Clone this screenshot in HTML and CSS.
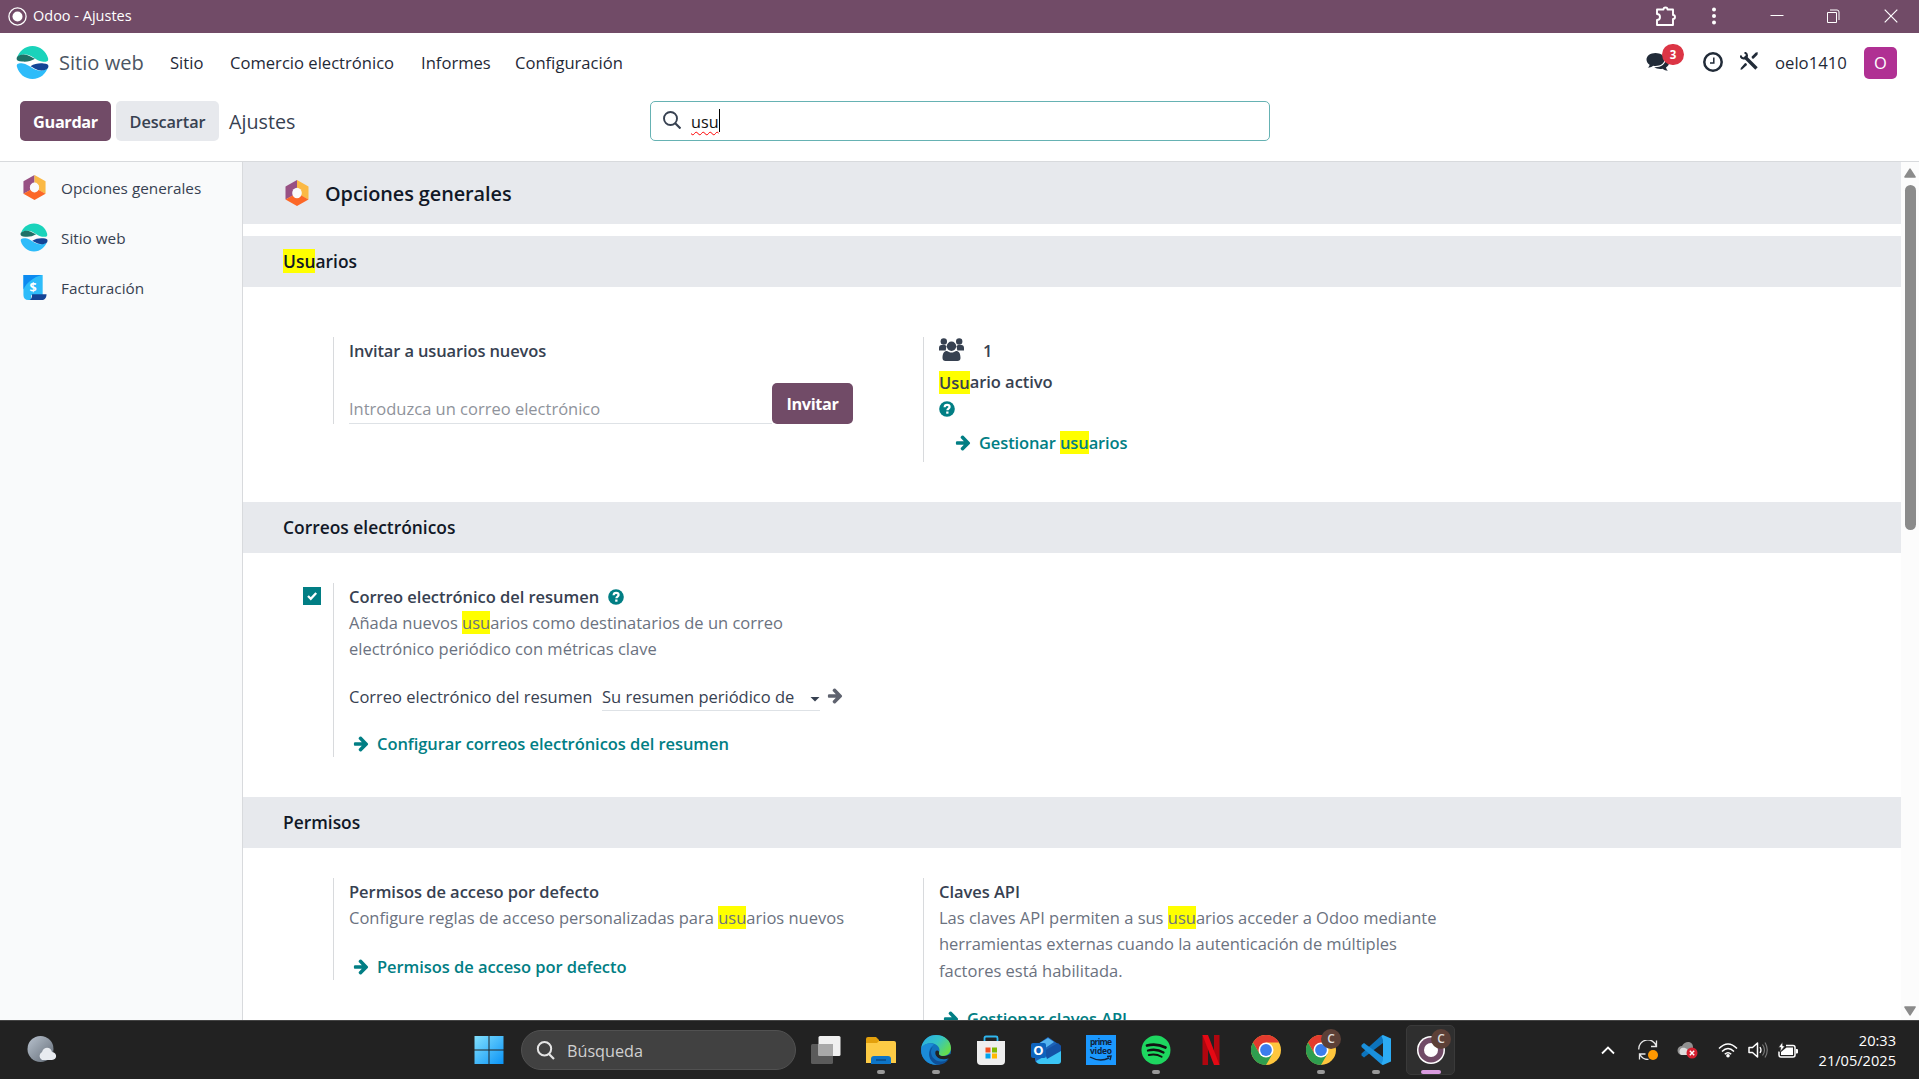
FILE: index.html
```html
<!DOCTYPE html>
<html lang="es">
<head>
<meta charset="utf-8">
<title>Odoo - Ajustes</title>
<link rel="stylesheet" href="styles.css">
</head>
<body>
<svg class="defs" width="0" height="0" aria-hidden="true">
  <symbol id="arrow" viewBox="0 130 1472 1660"><path fill="currentColor" d="M1472 960q0 54-37 91l-651 651q-39 37-91 37-51 0-90-37l-75-75q-38-38-38-91t38-91l293-293H117q-52 0-84.500-37.500T0 1024V896q0-53 32.500-90.500T117 768h704L528 474q-38-36-38-90t38-90l75-75q38-38 90-38 53 0 91 38l651 651q37 35 37 90z"/></symbol>
  <symbol id="help" viewBox="0 0 16 16"><circle cx="8" cy="8" r="7.800" fill="currentColor"/><path d="M5.600 6.300C5.700 4.600 6.800 3.900 8.100 3.900c1.500 0 2.500.9 2.500 2.100 0 1.600-2.200 1.700-2.200 3.300" fill="none" stroke="#fff" stroke-width="2.200"/><rect x="7.200" y="10.500" width="2.300" height="2.200" fill="#fff"/></symbol>
  <symbol id="web" viewBox="0 0 33 33"><path fill="#1ad3bb" d="M1 12C3 5 9 0 16.500 0S30 5 32 12c1 4-2 4-6 3.500C20 15 16 8.500 9 8.500 5 8.500 2 10 1 12z"/><path fill="#1f7167" d="M1 11c4-3.500 9-3 13.500-.5 1.500.8 3 1.500 4.500 2.200-4 2.500-8.500 3.300-13 2.800C1.500 15.200-.2 14 1 11z"/><path fill="#2ebcfa" d="M1 21c-1-3.500 2-4 6-3.500 6 .8 10 7 17 7 4 0 7-1.500 8-3.500-2 7-8 12-15.500 12S3 28 1 21z"/><path fill="#144496" d="M32 22c-4 3.500-9 3-13.500.5-1.500-.8-2.500-1.500-4-2.200 4-2.500 8.500-3.300 13-2.800 4.500.3 5.700 1.500 4.500 4.500z"/></symbol>
  <symbol id="general" viewBox="0 0 24 26"><path fill="#985184" d="M12 0v8L8 10.500v5L.500 19.500V6.500z"/><path fill="#fbb945" d="M12 0l11.500 6.500v13L16 15.500v-5L12 8z"/><path fill="#fc6727" d="M.500 19.500L8 15.300l4 2.700 4-2.700 7.500 4.200L12 26z"/><ellipse class="hole" cx="12" cy="13" rx="4.800" ry="5.200"/></symbol>
  <symbol id="chrome" viewBox="0 0 30 30"><circle cx="15" cy="15" r="15" fill="#ffc63d"/><path fill="#e33b2e" d="M2 7.500A15 15 0 0 1 28 7.500H15L8.500 18.800z"/><path fill="#2f9e4f" d="M2 7.500A15 15 0 0 0 15 30l6.500-11.200L8.500 18.800z"/><circle cx="15" cy="15" r="7.500" fill="#fff"/><circle cx="15" cy="15" r="5.900" fill="#3b7ded"/></symbol>
</svg>

<header class="titlebar">
  <svg class="app-dot" viewBox="0 0 19 19"><circle cx="9.500" cy="9.500" r="8.600" fill="none" stroke="#fff" stroke-width="1.300"/><circle cx="9.500" cy="9.500" r="5" fill="#fff"/></svg>
  <span class="window-title">Odoo - Ajustes</span>
  <div class="window-tools">
    <svg class="puzzle" viewBox="0 0 22 22"><path d="M2 4.500h6.500a2 2 0 0 1 4 0H18v5.500a2 2 0 0 1 0 4V20H2v-5a3 3 0 0 0 0-6z" fill="none" stroke="#fff" stroke-width="1.900" stroke-linejoin="round"/></svg>
    <svg class="dots" viewBox="0 0 6 18"><g fill="#fff"><circle cx="3" cy="2.500" r="2"/><circle cx="3" cy="9" r="2"/><circle cx="3" cy="15.500" r="2"/></g></svg>
    <svg class="win-btn minimize" viewBox="0 0 14 14"><path d="M.500 6.500h13" stroke="#fff"/></svg>
    <svg class="win-btn restore" viewBox="0 0 14 14"><path d="M1.500 3.500h9v10h-9zM4 1h7a2 2 0 0 1 2 2v8" fill="none" stroke="#fff"/></svg>
    <svg class="win-btn close" viewBox="0 0 14 14"><path d="M.700.700l12.600 12.600M13.300.700L.700 13.300" stroke="#fff" stroke-width="1.200"/></svg>
  </div>
</header>

<nav class="navbar">
  <svg class="brand-icon"><use href="#web"/></svg>
  <span class="brand">Sitio web</span>
  <span class="menu m-sitio">Sitio</span>
  <span class="menu m-com">Comercio electrónico</span>
  <span class="menu m-inf">Informes</span>
  <span class="menu m-conf">Configuración</span>
  <div class="systray">
    <div class="chat">
      <svg viewBox="0 0 24 20"><path fill="#212b38" d="M9.500 1C14.500 1 18.500 3.800 18.500 7.500S14.500 14 9.500 14c-.8 0-1.600-.1-2.300-.2C5.300 15.200 3.500 15.700 1.700 15.800c1-.9 1.700-1.800 1.900-3.100C1.700 11.500.500 9.600.500 7.500.500 3.800 4.500 1 9.500 1z"/><path fill="#212b38" d="M20 6.300c1.800 1.100 3 2.700 3 4.500 0 2-1.200 3.700-3 4.800.2 1.200.9 2.200 1.800 3.100-1.800-.1-3.800-.8-5.300-2-3 .6-6 .1-8.300-1.400 6.500.3 11.800-3.100 11.800-9z"/></svg>
      <span class="badge">3</span>
    </div>
    <svg class="clock" viewBox="0 0 20 20"><circle cx="10" cy="10" r="8.700" fill="none" stroke="#212b38" stroke-width="2.500"/><path d="M10.800 5.500v5.500H7" fill="none" stroke="#212b38" stroke-width="1.500"/></svg>
    <svg class="tools" viewBox="0 0 18 18"><path d="M4.500 4.500L16.500 16.500" stroke="#212b38" stroke-width="3.400"/><path d="M.500 3.500Q1 6 3.500 6.500T7 4Q7.200 1.200 4.500.500" fill="none" stroke="#212b38" stroke-width="2"/><path d="M12 6.500l-.5-1.800L15.800.500 17.800.200l-.3 2.500-4 4zM6.500 11.500L7 13l-5 4.500-1.500.3.300-1.800 4.300-5z" fill="#212b38"/></svg>
    <span class="user">oelo1410</span>
    <span class="avatar">O</span>
  </div>
</nav>

<div class="control-panel">
  <button class="btn primary save">Guardar</button>
  <button class="btn light">Descartar</button>
  <span class="crumb">Ajustes</span>
  <div class="search">
    <svg class="glass" viewBox="0 0 18 18"><circle cx="7.500" cy="7.500" r="6.500" fill="none" stroke="#374151" stroke-width="1.900"/><path d="M12 12l5.500 5.500" stroke="#374151" stroke-width="2.200"/></svg>
    <span class="query">usu</span><span class="caret"></span>
  </div>
</div>

<div class="workspace">
  <aside class="sidebar">
    <div class="tab"><svg class="ic-general"><use href="#general"/></svg><span>Opciones generales</span></div>
    <div class="tab"><svg class="ic-web"><use href="#web"/></svg><span>Sitio web</span></div>
    <div class="tab"><svg class="ic-inv" viewBox="0 0 25 26"><path d="M1 0h20v21H9v5H6c-3 0-5-2-5-5z" fill="#2ebcfa"/><path d="M1 0h19C12 2 4 8 1 15z" fill="#0d8af0"/><path d="M10 20h15c0 4-2 6-5 6H6c3 0 4-2 4-6z" fill="#144496"/><text x="11" y="17.500" text-anchor="middle" class="dollar">$</text></svg><span>Facturación</span></div>
  </aside>

  <main class="settings">
    <h2 class="app-head"><svg class="ic-general grey"><use href="#general"/></svg><span>Opciones generales</span></h2>

    <h3 class="band first"><mark>Usu</mark>arios</h3>
    <section class="block users">
      <div class="setting invite">
        <b class="label">Invitar a usuarios nuevos</b>
        <div class="invite-row"><span class="field placeholder">Introduzca un correo electrónico</span><button class="btn primary invite-btn">Invitar</button></div>
      </div>
      <div class="setting active-users">
        <div class="count"><svg viewBox="0 0 25 23"><g fill="#374151"><circle cx="4.800" cy="3.500" r="3.200"/><circle cx="20.200" cy="3.500" r="3.200"/><path d="M0 12.500V10c0-2 1-3 2.500-3H6l1.500 1-.8 4.500zM25 12.500V10c0-2-1-3-2.500-3H19l-1.500 1 .8 4.500z"/><circle cx="12.500" cy="8.300" r="4.700"/><path d="M3.500 20c0-4.500 1.500-7 4.500-7l2 1q2.500 1 5 0l2-1c3 0 4.500 2.500 4.500 7 0 2-1.200 3-3 3h-12c-1.800 0-3-1-3-3z"/></g></svg><b>1</b></div>
        <b class="label"><mark>Usu</mark>ario activo</b>
        <svg class="help"><use href="#help"/></svg>
        <a class="link"><svg><use href="#arrow"/></svg><span>Gestionar <mark>usu</mark>arios</span></a>
      </div>
    </section>

    <h3 class="band">Correos electrónicos</h3>
    <section class="block mails">
      <div class="setting digest">
        <span class="checkbox"><svg viewBox="0 0 18 18"><path d="M5 9l2.800 2.800L13.200 6" fill="none" stroke="#fff" stroke-width="2.300"/></svg></span>
        <b class="label">Correo electrónico del resumen<svg class="help"><use href="#help"/></svg></b>
        <p class="desc">Añada nuevos <mark>usu</mark>arios como destinatarios de un correo<br>electrónico periódico con métricas clave</p>
        <div class="digest-row"><span class="digest-label">Correo electrónico del resumen</span><span class="select"><span>Su resumen periódico de</span><i class="down"></i></span><svg class="ext"><use href="#arrow"/></svg></div>
        <a class="link"><svg><use href="#arrow"/></svg><span>Configurar correos electrónicos del resumen</span></a>
      </div>
    </section>

    <h3 class="band">Permisos</h3>
    <section class="block perms">
      <div class="setting defaults">
        <b class="label">Permisos de acceso por defecto</b>
        <p class="desc">Configure reglas de acceso personalizadas para <mark>usu</mark>arios nuevos</p>
        <a class="link"><svg><use href="#arrow"/></svg><span>Permisos de acceso por defecto</span></a>
      </div>
      <div class="setting keys">
        <b class="label">Claves API</b>
        <p class="desc">Las claves API permiten a sus <mark>usu</mark>arios acceder a Odoo mediante<br><span class="tight">herramientas externas cuando la autenticación de múltiples</span><br>factores está habilitada.</p>
        <a class="link"><svg><use href="#arrow"/></svg><span>Gestionar claves API</span></a>
      </div>
    </section>
  </main>
  <div class="scrollbar">
    <svg viewBox="0 0 12 10"><path d="M6 1.200L11 9H1z" fill="#8b8b8b" stroke="#8b8b8b" stroke-width="1.600" stroke-linejoin="round"/></svg>
    <span class="thumb"></span>
    <svg class="end" viewBox="0 0 12 10"><path d="M6 8.800L11 1H1z" fill="#8b8b8b" stroke="#8b8b8b" stroke-width="1.600" stroke-linejoin="round"/></svg>
  </div>
</div>

<footer class="taskbar">
  <svg class="weather" viewBox="0 0 30 28"><defs><linearGradient id="moon" x1="0" y1="0" x2="1" y2="1"><stop offset="0" stop-color="#b9c3cf"/><stop offset="1" stop-color="#626b76"/></linearGradient></defs><circle cx="13.500" cy="13" r="13" fill="url(#moon)"/><path d="M15 24a4.500 4.500 0 0 1 0-8c2-6 9-5 10 0 6 1 5 8 0 8z" fill="#e8ebf0"/></svg>
  <div class="apps">
    <span class="app"><svg viewBox="0 0 30 30"><defs><linearGradient id="winfill" x1="0" y1="0" x2="1" y2="1"><stop offset="0" stop-color="#82e0fd"/><stop offset="1" stop-color="#0a93f6"/></linearGradient></defs><path fill="url(#winfill)" d="M.500 1h14v13.500H.500zM15.500 1h14v13.500h-14zM.500 15.500h14V29H.500zM15.500 15.500h14V29h-14z"/></svg></span>
    <div class="task-search"><svg viewBox="0 0 19 19"><circle cx="8.500" cy="7.800" r="6.700" fill="none" stroke="#e4e4e4" stroke-width="2"/><path d="M13 13l5 5" stroke="#e4e4e4" stroke-width="2.200"/></svg><span>Búsqueda</span></div>
    <span class="app"><svg viewBox="0 0 30 30"><rect y="9" width="22" height="20" rx="1.500" fill="#5b5b5b"/><rect x="7.500" y="1" width="22" height="20" rx="1.500" fill="#f0f0f0"/><path d="M7.500 9H22v12H7.500z" fill="#a9a9a9"/></svg></span>
    <span class="app run"><svg viewBox="0 0 30 30"><path d="M0 4q0-2 2-2h8l3 3v5H0z" fill="#e3a00c"/><path d="M0 8h11l2-2h15q2 0 2 2v20H0z" fill="#fdcb45"/><path d="M5 29v-5q0-3 3-3h14q3 0 3 3v5z" fill="#0d75c8"/><path d="M10 25h10" stroke="#0a4a85" stroke-width="1.500"/></svg></span>
    <span class="app run"><svg viewBox="0 0 30 30"><defs><linearGradient id="edgeTop" x1="0" y1="0" x2="1" y2=".6"><stop offset="0" stop-color="#28a9e8"/><stop offset=".55" stop-color="#35c4c4"/><stop offset="1" stop-color="#66dc4c"/></linearGradient></defs><circle cx="15" cy="15" r="15" fill="#1272bd"/><path d="M.200 13C2 4 8 0 15 0c9 0 15 6 15 13 0 5-4 8-8 8-3 0-5-1-4.500-2.500C20 15 18 10 12.500 8.500 8 7.500 3 9 .200 13z" fill="url(#edgeTop)"/><path d="M.200 13C3 8 9 7.500 13 9.500c-4 2-6 7-4 12 2 5 6 7.500 9 8C8 31-1 24 .200 13z" fill="#1b8bd8"/><path d="M12 11.500c-5 6 0 15 8 15 4 0 6-1 8-3-3 5-8 7-13 6C7 26 6 16 12 11.500z" fill="#0e4f97"/><path d="M18 18.500c-.5 3 6 3.500 10 1l2-.5v3l-2.500 1.500C20 26 13 22 14.500 16.500c1-2 4.500-1 3.500 2z" fill="#232323"/></svg></span>
    <span class="app"><svg viewBox="0 0 30 30"><path d="M8.500 7V3q0-1.500 1.500-1.500h10q1.500 0 1.500 1.500v4" fill="none" stroke="#2fb6ee" stroke-width="1.800"/><path d="M1 6h28v20q0 4-4 4H5q-4 0-4-4z" fill="#eee"/><path d="M9.500 12.500h5v5h-5z" fill="#f25022"/><path d="M16 12.500h5v5h-5z" fill="#7fba00"/><path d="M9.500 18.500h5v5h-5z" fill="#00a4ef"/><path d="M16 18.500h5v5h-5z" fill="#ffb900"/></svg></span>
    <span class="app"><svg viewBox="0 0 30 30"><path d="M4 11L17 2l13 9v14q0 3-3 3H8q-4 0-4-3z" fill="#1c63b8"/><path d="M7 9l10-6 6 4-13 9z" fill="#54b4f0"/><path d="M30 14v12q0 3-3 3H9q-3 0-4-3l15-8z" fill="#3bc5f5"/><path d="M13 16L27 8l3 3v5l-14 8z" fill="#1453a6"/><rect y="8" width="15" height="15" rx="2" fill="#0d63bd"/><text x="7.500" y="20" text-anchor="middle" class="outlook">O</text></svg></span>
    <span class="app"><svg viewBox="0 0 30 30"><rect width="30" height="30" fill="#1b98ff"/><text x="15" y="10" textLength="22" class="prime" text-anchor="middle">prime</text><text x="15" y="19" textLength="22" class="prime" text-anchor="middle">video</text><path d="M4 22q10 5.500 19 1M21 21.500l4-.5-1 4" fill="none" stroke="#10233c" stroke-width="1.400"/></svg></span>
    <span class="app run"><svg viewBox="0 0 30 30"><circle cx="15" cy="15" r="14.500" fill="#1ed760"/><g fill="none" stroke="#111" stroke-linecap="round"><path d="M6 10.500q9.500-2.500 18.500 2" stroke-width="2.700"/><path d="M7 15.500q8.500-2.200 15.500 2" stroke-width="2.300"/><path d="M7.800 20q7-1.700 12.800 1.700" stroke-width="1.900"/></g></svg></span>
    <span class="app"><svg viewBox="0 0 30 30"><path d="M6.500 0H12v30H6.500zM18 0h5.500v30H18z" fill="#b1060f"/><path d="M6.500 0H12l11.500 30H18z" fill="#e50914"/></svg></span>
    <span class="app"><svg><use href="#chrome"/></svg></span>
    <span class="app run"><svg><use href="#chrome"/></svg><i class="profile">C</i></span>
    <span class="app run"><svg viewBox="0 0 30 30"><path d="M22 0v8L3 22.500.500 20.500v-2L20 1z" fill="#0d74bd"/><path d="M22 30v-8L3 8 .500 10v2L20 29z" fill="#1a90dc"/><path d="M22 0l8 3.500v23L22 30l-1.500-1 1.500-4V5l-1.500-4z" fill="#2cabf3"/></svg></span>
    <span class="app current"><svg viewBox="0 0 30 30"><circle cx="15" cy="15" r="14" fill="#fff"/><circle cx="15" cy="15" r="12.500" fill="#714b67"/><circle cx="15" cy="15" r="7" fill="#fff"/></svg><i class="profile">C</i></span>
  </div>
  <div class="tray">
    <svg class="chev" viewBox="0 0 14 9"><path d="M1 7.500l6-6 6 6" fill="none" stroke="#fff" stroke-width="1.800"/></svg>
    <svg class="sync" viewBox="0 0 20 20"><path d="M.800 9.500a9 9 0 0 1 17.500-3.500M18.500.500V6.500H13M1.500 19.500v-5.500h6M2 14.500a9 9 0 0 0 8.500 5" fill="none" stroke="#e8e8e8" stroke-width="1.300"/><circle cx="15" cy="15" r="5" fill="#ff9800"/></svg>
    <svg class="cloud" viewBox="0 0 21 18"><path d="M5 14a4.500 4.500 0 0 1 0-9C8-1 16 0 16 6v8z" fill="#919191"/><path d="M4.500 14a4 4 0 0 1 0-7c5-1 6 2 8 4v3z" fill="#ddd"/><circle cx="15" cy="12" r="5.500" fill="#d52030"/><path d="M12.800 9.800l4.400 4.400M17.200 9.800l-4.400 4.400" stroke="#fff" stroke-width="1.400"/></svg>
    <svg class="wifi" viewBox="0 0 20 16"><g fill="none" stroke="#fff" stroke-width="1.500"><path d="M1 6.500q9-9 18 0M4 9.500q6-6 12 0M6.800 12.200q3.200-3 6.400 0"/></g><circle cx="10" cy="13.800" r="1.800" fill="#fff"/></svg>
    <svg class="sound" viewBox="0 0 20 18"><path d="M1 6.500h3.500L9.500 2v14l-5-4.500H1z" fill="none" stroke="#fff" stroke-width="1.500" stroke-linejoin="round"/><path d="M12 6q2 3 0 6" fill="none" stroke="#fff" stroke-width="1.300"/><path d="M14.500 3.500q4 5.500 0 11M17 1.500q4.500 7.500 0 15" fill="none" stroke="#777" stroke-width="1.200"/></svg>
    <svg class="batt" viewBox="0 0 20 17"><path d="M8 3.500h7q2 0 2 2V13q0 2-2 2H3q-2 0-2-2V9.500" fill="none" stroke="#fff" stroke-width="1.500"/><path d="M8.500 5.500H15v7.500H3v-3z" fill="#fff"/><path d="M18 7h1q1 0 1 1v2.500q0 1-1 1h-1z" fill="#fff"/><path d="M4.500 0L.500 5.500h2.300L2 10l5-6H4.800z" fill="#fff" stroke="#232323" stroke-width=".6"/></svg>
    <div class="time"><span>20:33</span><span>21/05/2025</span></div>
  </div>
</footer>
</body>
</html>
```

FILE: styles.css
```css
* { box-sizing: border-box; }
body {
  margin: 0;
  width: 1919px;
  height: 1079px;
  overflow: hidden;
  display: flex;
  flex-direction: column;
  background: #fff;
  color: #374151;
  font-family: "Open Sans", "Noto Sans", sans-serif;
  font-size: 16.5px;
  line-height: 26px;
  white-space: nowrap;
}
svg { display: block; flex: none; }
.defs { position: absolute; }
mark { background: #ff0; color: inherit; }
h2, h3, p { margin: 0; }

/* Window title bar */
.titlebar { height: 33px; flex: none; background: #714b67; color: #fff; display: flex; align-items: center; padding: 0 8px 1px; }
.app-dot { width: 19px; height: 19px; }
.window-title { margin-left: 6px; font-size: 14.500px; }
.window-tools { margin-left: auto; display: flex; align-items: center; padding-right: 13px; }
.puzzle { width: 22px; height: 22px; margin-right: 34px; }
.dots { width: 6px; height: 18px; margin-right: 53px; }
.win-btn { width: 14px; height: 14px; }
.minimize { margin-right: 42px; }
.restore { margin-right: 44px; }

/* Navigation */
.navbar { height: 59px; flex: none; display: flex; align-items: center; padding: 0 22px 0 16px; color: #1f2937; }
.brand-icon { width: 33px; height: 33px; }
.brand { margin-left: 10px; width: 111px; font-size: 20.100px; padding-top: 1px; color: #4b5563; }
.menu { font-size: 16.600px; }
.m-sitio { width: 60px; }
.m-com { width: 191px; }
.m-inf { width: 94px; }
.systray { margin-left: auto; display: flex; align-items: center; }
.chat { position: relative; width: 24px; height: 20px; margin: -1px 33px 0 0; }
.chat svg { width: 24px; height: 20px; }
.badge { position: absolute; left: 16px; top: -8px; width: 22px; height: 21px; border-radius: 11px; background: #dc3545; color: #fff; font-size: 11.500px; font-weight: 700; line-height: 21px; text-align: center; }
.clock { width: 20px; height: 20px; margin: -1px 17px 0 0; }
.tools { width: 18px; height: 18px; margin: -3px 17px 0 0; }
.user { width: 89px; font-size: 16.700px; }
.avatar { width: 33px; height: 32px; border-radius: 5px; background: #b03093; color: #fff; text-align: center; line-height: 32px; }

/* Control panel */
.control-panel { height: 70px; flex: none; display: flex; align-items: flex-start; padding: 9px 0 0 20px; border-bottom: 1px solid #d8dadd; }
.btn { border: 0; border-radius: 5px; height: 40px; padding: 0; font: 700 16.300px/40px "Open Sans", sans-serif; letter-spacing: -.35px; }
.primary { background: #714b67; color: #fff; }
.save { width: 91px; padding-top: 1px; }
.light { width: 103px; margin-left: 5px; padding-top: 1px; background: #e7e9ed; color: #374151; font-weight: 600; letter-spacing: -.1px; }
.crumb { margin-left: 10px; width: 421px; line-height: 42px; font-size: 19.700px; }
.search { width: 620px; height: 40px; border: 1px solid #66b2b3; border-radius: 5px; display: flex; padding-left: 12px; }
.glass { width: 18px; height: 18px; margin-top: 9px; }
.query { margin: 7px 0 0 10px; height: 26px; font-size: 16.200px; color: #111; text-decoration: underline wavy #f00 1px; text-underline-offset: 3px; }
.caret { width: 1px; height: 23px; margin-top: 7px; background: #000; }

/* Settings area */
.workspace { height: 858px; flex: none; display: flex; overflow: hidden; }
.sidebar { width: 243px; background: #f9fafb; border-right: 1px solid #d8dadd; font-size: 15.300px; }
.tab { height: 50px; display: flex; align-items: center; padding-left: 20px; }
.tab span { padding-top: 2px; }
.tab svg { width: 28px; height: 29px; margin-right: 13px; }
.tab .ic-general, .tab .ic-inv { width: 25px; height: 25px; margin: 0 14px 0 2px; }
.hole { fill: #f9fafb; }
.dollar { font-size: 13px; font-weight: 700; fill: #fff; }
.settings { flex: 1; min-width: 0; height: 858px; overflow: hidden; }
.app-head { height: 62px; background: #e7e9ed; display: flex; align-items: center; padding-left: 42px; color: #111827; font-size: 19.900px; letter-spacing: -.08px; font-weight: 600; }
.app-head span { padding-top: 2px; }
.app-head svg { width: 24px; height: 26px; margin-right: 16px; }
.band { height: 51px; background: #e7e9ed; color: #111827; font-size: 17.400px; line-height: 51px; font-weight: 600; padding-left: 40px; }
.band.first { margin-top: 12px; }
.block { display: flex; padding-left: 90px; align-items: flex-start; }
.users { height: 215px; padding-top: 50px; }
.mails { height: 244px; padding-top: 30px; }
.perms { height: 260px; padding-top: 30px; }
.setting { position: relative; width: 521px; border-left: 1px solid #d8dadd; padding: 1px 0 0 15px; margin-right: 69px; }
.label { display: flex; align-items: center; font-weight: 600; height: 26px; letter-spacing: -.04px; }
.label mark { line-height: 23px; }
.desc { color: #6b7280; line-height: 26.300px; }
.tight { letter-spacing: -.06px; }
.link { display: flex; align-items: center; height: 26px; color: #017e84; font-weight: 600; padding-left: 4px; letter-spacing: -.06px; }
.link svg { width: 16px; height: 16px; margin-right: 8px; }
.help { width: 16px; height: 16px; color: #017e84; }
.label .help { margin-left: 10px; }

.invite { height: 87px; }
.invite .label { letter-spacing: -.13px; }
.invite-row { display: flex; align-items: flex-end; margin-top: 19px; }
.field { width: 423px; height: 33px; line-height: 35px; border-bottom: 1px solid #dee2e6; color: #8f939b; }
.invite-btn { width: 81px; height: 41px; }
.active-users { height: 125px; }
.count { display: flex; align-items: flex-start; height: 31px; }
.count svg { width: 25px; height: 23px; margin-right: 19px; }
.count b { font-weight: 600; line-height: 26px; }
.active-users .help { margin-top: 6px; }
.active-users .link { padding-left: 16px; margin-top: 13px; letter-spacing: -.12px; }

.digest { height: 174px; }
.checkbox { position: absolute; left: -31px; top: 4px; width: 18px; height: 18px; background: #017e84; }
.digest .help { margin-left: 9px; }
.digest-row { display: flex; height: 27px; margin-top: 21px; }
.digest-label { width: 253px; }
.select { width: 218px; border-bottom: 1px solid #dee2e6; display: flex; justify-content: space-between; }
.down { width: 10px; height: 5px; margin-top: 13px; background: #374151; clip-path: polygon(0 0, 100% 0, 50% 100%); }
.ext { width: 16px; height: 16px; margin: 4px 0 0 7px; color: #5f636f; }
.digest .link { margin-top: 20px; }
.defaults { height: 102px; }
.defaults .link { margin-top: 23px; }
.keys { height: 200px; }
.keys .link { margin-top: 22px; }

.scrollbar { width: 18px; background: #fcfcfc; display: flex; flex-direction: column; align-items: center; padding: 6px 0 4px; }
.scrollbar svg { width: 12px; height: 10px; }
.thumb { width: 11px; height: 345px; border-radius: 6px; background: #8b8b8b; margin-top: 7px; }
.end { margin-top: auto; }

/* Taskbar */
.taskbar { height: 59px; flex: none; background: #222; border-top: 1px solid #444; display: flex; align-items: center; padding-left: 27px; color: #fff; }
.weather { width: 30px; height: 28px; }
.apps { display: flex; align-items: center; margin-left: 404px; }
.app { position: relative; width: 55px; height: 50px; display: flex; align-items: center; justify-content: center; }
.app:first-child { margin-right: 5px; }
.app > svg { width: 30px; height: 30px; }
.task-search { width: 275px; height: 40px; margin-right: 2px; border: 1px solid #515151; border-radius: 20px; background: #414141; display: flex; align-items: center; padding-left: 14px; color: #d0d0d0; font-size: 16.200px; }
.task-search span { padding-top: 1px; }
.task-search svg { width: 19px; height: 19px; margin-right: 12px; }
.run::after, .current::after { content: ""; position: absolute; bottom: 1px; width: 8px; height: 4px; border-radius: 2px; background: #999; }
.current::before { content: ""; position: absolute; inset: 0 3px; border: 1px solid #3a3a3a; border-radius: 5px; background: #2f2f2f; }
.current > svg { position: relative; }
.current::after { width: 20px; background: #d99bdf; }
.profile { position: absolute; left: 28px; top: 4px; width: 20px; height: 20px; border-radius: 10px; background: #5d4037; color: #ddd; font: 600 12px/20px "Open Sans", sans-serif; text-align: center; }
.outlook { font-size: 13px; font-weight: 700; fill: #fff; }
.prime { font-size: 8.500px; font-weight: 700; fill: #10233c; }
.tray { margin-left: auto; display: flex; align-items: center; padding-right: 23px; }
.chev { width: 14px; height: 9px; margin-right: 23px; }
.sync { width: 20px; height: 20px; margin-right: 19px; }
.cloud { width: 21px; height: 18px; margin-right: 20px; }
.wifi { width: 20px; height: 16px; margin-right: 10px; }
.sound { width: 20px; height: 18px; margin-right: 10px; }
.batt { width: 20px; height: 17px; }
.time { width: 98px; display: flex; flex-direction: column; align-items: flex-end; font-size: 14.600px; line-height: 20px; }
```
